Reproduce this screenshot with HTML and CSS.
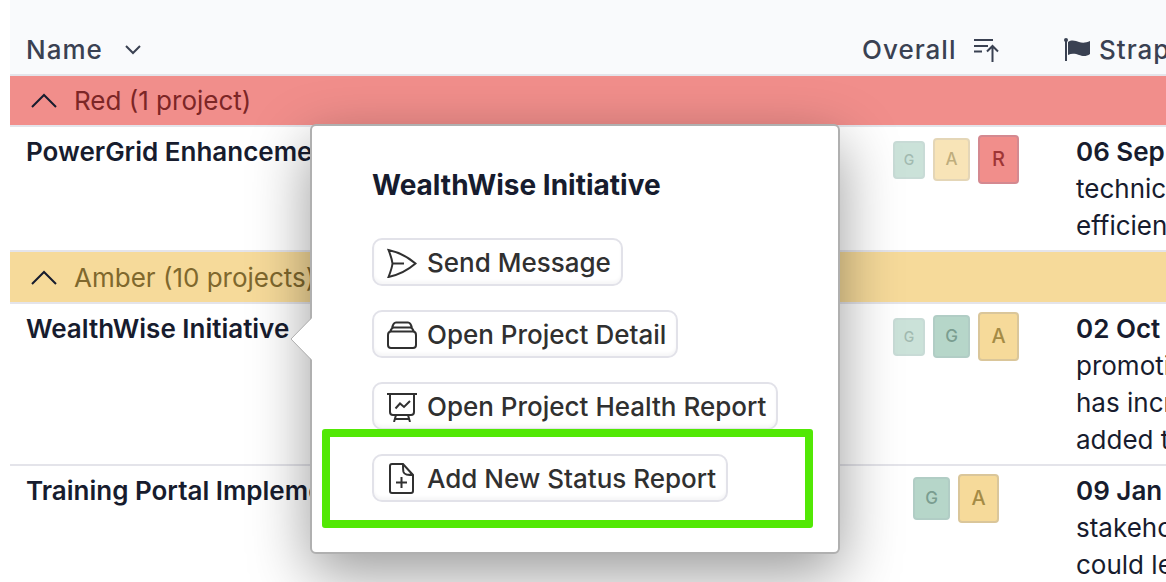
FILE: index.html
```html
<!DOCTYPE html>
<html lang="en">

<head>
    <meta charset="utf-8">
    <title>Projects</title>
    <link rel="stylesheet" href="styles.css">
</head>

<body>
    <div class="page">
        <table class="projects">
            <colgroup>
                <col class="col-name">
                <col class="col-overall">
                <col class="col-strap">
            </colgroup>
            <thead>
                <tr>
                    <th class="head-name">
                        <div class="head-label">Name
                            <svg class="chevron-down" width="16" height="10" viewBox="0 0 16 10"><path d="M1 1l7 7 7-7"/></svg>
                        </div>
                    </th>
                    <th class="head-overall">
                        <div class="head-label">Overall
                            <svg class="sort" width="25" height="24" viewBox="0 0 25 24"><path d="M0 2h19M0 8h14M0 13.500h8M18.500 24V8M13 13.500l5.500-5.500 5.500 5.500"/></svg>
                        </div>
                    </th>
                    <th class="head-strap">
                        <div class="head-label">
                            <svg class="flag" width="26" height="24" viewBox="0 0 26 24"><circle cx="2" cy="2" r="2"/><path d="M1 2h2v21H1z"/><path d="M4 4C8 1 12 3 15 4s7 1 11-1v13c-4 3-8 2-11 1s-7-2-11 0z"/></svg>
                            Strap
                        </div>
                    </th>
                </tr>
            </thead>
            <tbody>
                <tr class="group red">
                    <td colspan="3">
                        <div class="group-label">
                            <svg class="chevron-up" width="26" height="15" viewBox="0 0 26 15"><path d="M1 14L13 2l12 12"/></svg>
                            Red (1 project)
                        </div>
                    </td>
                </tr>
                <tr class="project">
                    <td class="name">PowerGrid Enhancement</td>
                    <td>
                        <div class="badges">
                            <span class="badge small green faded">G</span>
                            <span class="badge medium amber faded">A</span>
                            <span class="badge large red">R</span>
                        </div>
                    </td>
                    <td class="strap"><b>06 Sep</b><br>technic<br>efficien</td>
                </tr>
                <tr class="group amber">
                    <td colspan="3">
                        <div class="group-label">
                            <svg class="chevron-up" width="26" height="15" viewBox="0 0 26 15"><path d="M1 14L13 2l12 12"/></svg>
                            Amber (10 projects)
                        </div>
                    </td>
                </tr>
                <tr class="project">
                    <td class="name">WealthWise Initiative</td>
                    <td>
                        <div class="badges">
                            <span class="badge small green faded">G</span>
                            <span class="badge medium green">G</span>
                            <span class="badge large amber">A</span>
                        </div>
                    </td>
                    <td class="strap"><b>02 Oct</b><br>promoti<br>has incr<br>added t</td>
                </tr>
                <tr class="project">
                    <td class="name">Training Portal Implementation</td>
                    <td>
                        <div class="badges">
                            <span class="badge medium green">G</span>
                            <span class="badge large amber">A</span>
                        </div>
                    </td>
                    <td class="strap"><b>09 Jan</b><br>stakeho<br>could le</td>
                </tr>
            </tbody>
        </table>

        <div class="popover">
            <svg class="arrow" width="22" height="44" viewBox="0 0 22 44"><path class="arrow-fill" d="M22 1L1 22l21 21z"/><path class="arrow-line" d="M21 1.500L1 22l20 20.500"/></svg>
            <h2>WealthWise Initiative</h2>
            <div class="actions">
                <button type="button">
                    <svg class="icon" width="30" height="32" viewBox="0 0 30 32"><path d="M1.500 4C11 6 21 11 28.500 17.500 21 24 11 29 1.500 31c2-5 3.500-9 4-13.500C5 13 3.500 9 1.500 4zM5.500 17.500H17"/></svg>
                    Send Message
                </button>
                <button type="button">
                    <svg class="icon" width="30" height="32" viewBox="0 0 30 32"><path d="M1 17c0-2 1-3.500 3-3.500h22c2 0 3 1.500 3 3.500v10c0 2-1 3-3 3H4c-2 0-3-1-3-3zM3 14c1-3 2-4.500 4-4.500h16c2 0 3 1.500 4 4.500M5 10c1-4 2-5.500 4-5.500h12c2 0 3 1.500 4 5.500"/></svg>
                    Open Project Detail
                </button>
                <button type="button">
                    <svg class="icon" width="30" height="32" viewBox="0 0 30 32"><path d="M0 4h30M3 4v18c0 2 1 3 3 3h18c2 0 3-1 3-3V4M9 25l-2 7M21 25l2 7M8 29h14M8.500 18.500l4.500-5 4 3.500 6-6"/></svg>
                    Open Project Health Report
                </button>
                <button type="button">
                    <svg class="icon" width="30" height="32" viewBox="0 0 30 32"><path d="M5 2h11l10 11v16c0 1-1 2-2 2H5c-1 0-2-1-2-2V4c0-1 1-2 2-2zM16 2c0 4 0 6 .500 8 .500 1.500 1 2 3 2.500 2 .300 4 .500 6 .500M14.500 15v11M9 20.500h11"/></svg>
                    Add New Status Report
                </button>
            </div>
            <div class="highlight"></div>
        </div>
    </div>
</body>

</html>
```
FILE: styles.css
```css
html, body {
    margin: 0;
    background: #fff;
}
body {
    font-family: Inter, sans-serif;
    font-size: 26px;
    line-height: 37px;
    color: #171c2e;
}
.page {
    position: relative;
    height: 100vh;
    padding-left: 10px;
    overflow: hidden;
}
svg {
    flex: none;
    fill: none;
    stroke: currentColor;
    stroke-width: 2;
}

/* table */
.projects {
    width: 100%;
    table-layout: fixed;
    border-collapse: separate;
    border-spacing: 0;
}
.col-overall {
    width: 208px;
}
.col-strap {
    width: 106px;
}
th, td {
    padding: 0;
    text-align: left;
    vertical-align: top;
    white-space: nowrap;
    border-bottom: 2px solid #e4e4ea;
}
th {
    height: 43px;
    padding-top: 31px;
    background: #f9fafc;
    color: #3a4152;
    font-weight: 500;
    letter-spacing: 1px;
}
.head-name {
    padding-left: 16px;
}
.head-overall {
    padding-left: 10px;
}
.head-strap {
    padding-left: 4px;
}
.head-label {
    display: flex;
    align-items: center;
}
.chevron-down {
    margin-left: 22px;
}
.sort {
    margin-left: 18px;
}
.flag {
    margin-right: 9px;
    fill: currentColor;
    stroke: none;
}
.group-label {
    display: flex;
    align-items: center;
    gap: 17px;
    height: 49px;
    padding-left: 21px;
}
.amber .group-label {
    height: 50px;
}
.chevron-up {
    color: #171c2e;
}
.group.red td {
    background: #f18e8b;
    color: #7c2626;
}
.group.amber td {
    background: #f6da9a;
    color: #7f682d;
}
.project td {
    padding-top: 6px;
    padding-bottom: 6px;
}
.project .name {
    padding-left: 16px;
    font-weight: 600;
}
.project .strap {
    padding-left: 16px;
}
.strap b {
    font-weight: 600;
}

/* status badges */
.badges {
    display: flex;
    justify-content: center;
    align-items: center;
    gap: 8px;
    margin-top: 2px;
}
.badge {
    display: flex;
    justify-content: center;
    align-items: center;
    box-sizing: border-box;
    border: 2px solid;
    border-radius: 4px;
    font-weight: 500;
}
.small {
    width: 32px;
    height: 38px;
    font-size: 14px;
}
.medium {
    width: 37px;
    height: 43px;
    font-size: 17px;
}
.large {
    width: 41px;
    height: 49px;
    font-size: 20px;
}
.badge.green {
    background: #b6d6c9;
    border-color: #b1cdc5;
    color: #7a9d90;
}
.badge.amber {
    background: #f6da9a;
    border-color: #dac69a;
    color: #a58b45;
}
.badge.red {
    background: #f18e8b;
    border-color: #d48990;
    color: #9f3535;
}
.badge.faded {
    opacity: 0.7;
}

/* popover */
.popover {
    position: absolute;
    top: 124px;
    left: 310px;
    box-sizing: border-box;
    width: 530px;
    padding: 41px 60px 50px;
    background: #fff;
    border: 2px solid #b0b0b0;
    border-radius: 6px;
    box-shadow: 0 20px 60px rgba(0, 0, 0, 0.4);
}
.arrow {
    position: absolute;
    top: 191px;
    left: -22px;
    stroke: none;
}
.arrow-fill {
    fill: #fff;
}
.arrow-line {
    stroke: #b0b0b0;
    stroke-width: 1;
}
.popover h2 {
    margin: 0 0 34px;
    font-size: 28px;
    line-height: 37px;
    font-weight: 700;
}
.actions {
    display: flex;
    flex-direction: column;
    align-items: flex-start;
    gap: 24px;
}
.actions button {
    display: flex;
    align-items: center;
    gap: 10px;
    height: 48px;
    padding: 0 10px 0 13px;
    background: #fff;
    border: 2px solid #e2e2e9;
    border-radius: 10px;
    box-shadow: inset 0 -3px 3px #f7f7f8;
    color: #303030;
    font-family: inherit;
    font-size: 26px;
    font-weight: 500;
    white-space: nowrap;
}
.highlight {
    position: absolute;
    left: 10px;
    right: 25px;
    bottom: 24px;
    box-sizing: border-box;
    height: 99px;
    border: 8px solid #52e805;
    border-radius: 3px;
}
```
